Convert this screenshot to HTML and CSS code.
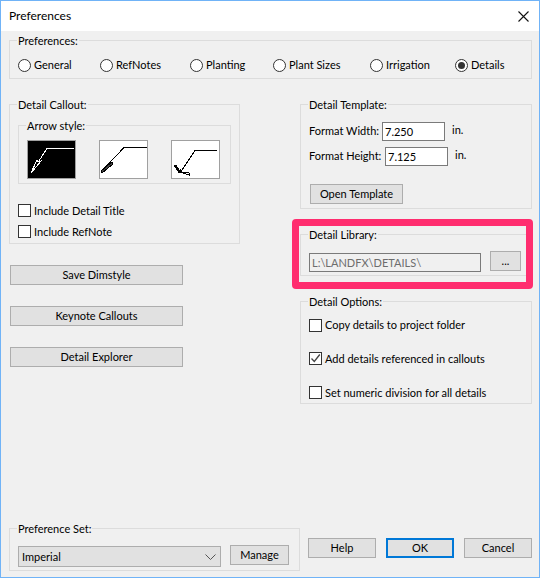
FILE: index.html
```html
<!DOCTYPE html>
<html lang="en">
<head>
<meta charset="utf-8">
<title>Preferences</title>
<link rel="stylesheet" href="styles.css">
</head>
<body>
<div class="window">
  <header class="titlebar">
    <span>Preferences</span>
    <svg class="close" width="11" height="11" viewBox="0 0 11 11"><path d="M.5.5l10 10M10.5.5l-10 10" stroke="#111" stroke-width="1.1" fill="none"/></svg>
  </header>
  <main class="content">
    <section class="group prefs">
      <div class="legend">Preferences:</div>
      <div class="radios">
        <label class="option"><i class="radio"></i>General</label>
        <label class="option"><i class="radio"></i>RefNotes</label>
        <label class="option"><i class="radio"></i>Planting</label>
        <label class="option"><i class="radio"></i>Plant Sizes</label>
        <label class="option"><i class="radio"></i>Irrigation</label>
        <label class="option"><i class="radio on"></i>Details</label>
      </div>
    </section>
    <div class="columns">
      <div class="col">
        <section class="group callout">
          <div class="legend">Detail Callout:</div>
          <section class="group arrows">
            <div class="legend">Arrow style:</div>
            <div class="arrow-row">
              <svg class="arrow-box selected" width="49" height="39" viewBox="0 0 49 39">
                <path d="M47 8.500H20L4 33" stroke="#fff" fill="none"/>
                <path d="M4 33l6-13 1 2 3-1z" stroke="#fff" fill="#000"/>
              </svg>
              <svg class="arrow-box" width="49" height="39" viewBox="0 0 49 39">
                <path d="M48 7.500H25L1.500 32.500" stroke="#000" fill="none"/>
                <path d="M2 31l11-9 1 2-11 9z" stroke="#000" fill="#444"/>
              </svg>
              <svg class="arrow-box" width="49" height="39" viewBox="0 0 49 39">
                <path d="M46 10.500H24L9 33" stroke="#000" fill="none"/>
                <path d="M4 25l5 8" stroke="#000" stroke-width="2.500" fill="none"/>
                <path d="M9 32l9 3 0-2-7-1-2-3" stroke="#000" fill="none"/>
              </svg>
            </div>
          </section>
          <label class="check first"><i class="box"></i>Include Detail Title</label>
          <label class="check second"><i class="box"></i>Include RefNote</label>
        </section>
        <div class="actions">
          <button class="btn wide">Save Dimstyle</button>
          <button class="btn wide">Keynote Callouts</button>
          <button class="btn wide">Detail Explorer</button>
        </div>
      </div>
      <div class="col">
        <section class="group template">
          <div class="legend">Detail Template:</div>
          <div class="field width"><span class="field-label">Format Width:</span><span class="input">7.250</span><span class="unit">in.</span></div>
          <div class="field height"><span class="field-label">Format Height:</span><span class="input">7.125</span><span class="unit">in.</span></div>
          <button class="btn open">Open Template</button>
        </section>
        <section class="group library">
          <div class="highlight"></div>
          <div class="legend">Detail Library:</div>
          <div class="library-row">
            <span class="input path">L:\LANDFX\DETAILS\</span>
            <button class="btn browse">...</button>
          </div>
        </section>
        <section class="group options">
          <div class="legend">Detail Options:</div>
          <label class="check opt1"><i class="box"></i>Copy details to project folder</label>
          <label class="check opt2"><i class="box"><svg width="11" height="11" viewBox="0 0 11 11"><path d="M1.500 5.500l2.800 3 5.500-7" stroke="#444" stroke-width="1.300" fill="none"/></svg></i>Add details referenced in callouts</label>
          <label class="check opt3"><i class="box"></i>Set numeric division for all details</label>
        </section>
      </div>
    </div>
    <footer class="footer">
      <section class="group prefset">
        <div class="legend">Preference Set:</div>
        <div class="prefset-row">
          <div class="select"><span>Imperial</span>
            <svg width="11" height="6" viewBox="0 0 11 6"><path d="M.5.500l5 5 5-5" stroke="#555" fill="none"/></svg>
          </div>
          <button class="btn manage">Manage</button>
        </div>
      </section>
      <div class="dialog-buttons">
        <button class="btn dlg">Help</button>
        <button class="btn dlg default">OK</button>
        <button class="btn dlg">Cancel</button>
      </div>
    </footer>
  </main>
</div>
</body>
</html>
```
FILE: styles.css
```css
* { box-sizing: border-box; }
html, body { margin: 0; padding: 0; }
body { font: 11px/16px Lato, "Liberation Sans", sans-serif; color: #000; }
.window { width: 540px; height: 578px; border: 1px solid #70b3f7; background: #f0f0f0; display: flex; flex-direction: column; overflow: hidden; }
.titlebar { height: 30px; background: #fff; display: flex; align-items: center; justify-content: space-between; padding: 0 10px 0 8px; flex: none; font-size: 12px; }
.content { flex: 1; display: flex; flex-direction: column; padding: 9px 7px 6px 8px; }
.group { border: 1px solid #dcdcdc; position: relative; }
.legend { width: fit-content; margin: -8px 0 0 7px; padding: 0 1px; background: #f0f0f0; height: 16px; position: relative; }
.prefs { height: 39px; }
.radios { display: grid; grid-template-columns: 82px 90px 83px 97px 85px auto; margin: 8px 0 0 8px; }
.option, .check { display: flex; align-items: flex-start; height: 16px; white-space: nowrap; }
.radio { width: 13px; height: 13px; margin-top: 2px; border: 1px solid #333; border-radius: 50%; background: #fff; margin-right: 3px; display: flex; align-items: center; justify-content: center; flex: none; }
.radio.on::after { content: ""; width: 7px; height: 7px; border-radius: 50%; background: #333; }
.box { width: 13px; height: 13px; margin-top: 1px; border: 1px solid #333; background: #fff; margin-right: 3px; flex: none; display: block; }
.box svg { display: block; }
.columns { display: grid; grid-template-columns: 231px 232px; column-gap: 60px; margin-top: 25px; }
.callout { height: 140px; }
.arrows { margin: 12px 0 0 8px; width: 213px; height: 59px; }
.arrow-row { display: flex; gap: 23px; margin: 6px 0 0 8px; }
.arrow-box { background: #fff; outline: 1px solid #a0a0a0; outline-offset: -1px; display: block; flex: none; }
.arrow-box path { shape-rendering: crispEdges; }
.arrow-box.selected { background: #000; }
.check { margin-left: 8px; line-height: 15px; }
.check.first { margin-top: 19px; }
.check.second { margin-top: 5px; }
.actions { display: flex; flex-direction: column; gap: 21px; margin: 21px 0 0 1px; }
.btn { font: inherit; color: #000; background: #e1e1e1; border: 1px solid #adadad; height: 20px; padding: 0; display: block; }
.wide { width: 173px; }
.template { height: 105px; }
.field { display: flex; margin-left: 8px; }
.field.width { margin-top: 9px; }
.field.height { margin-top: 6px; }
.field-label { line-height: 18px; white-space: nowrap; }
.width .field-label { width: 73px; }
.height .field-label { width: 76px; }
.input { height: 19px; width: 63px; background: #fff; border: 1px solid #7a7a7a; padding-left: 2px; line-height: 17px; display: block; }
.unit { margin-left: 7px; line-height: 15px; }
.open { width: 93px; margin: 18px 0 0 9px; }
.library { margin-top: 25px; height: 42px; }
.highlight { position: absolute; left: -9px; top: -16px; width: 241px; height: 70px; border: 7px solid #ff2d6f; border-radius: 4px; }
.library-row { display: flex; gap: 9px; margin: 8px 0 0 8px; }
.path { width: 172px; margin-top: 2px; background: #f0f0f0; color: #6d6d6d; }
.browse { width: 31px; }
.options { margin-top: 25px; height: 103px; }
.opt1 { margin-top: 8px; line-height: 14px; }
.opt2 { margin-top: 17px; }
.opt3 { margin-top: 18px; }
.footer { margin-top: auto; display: flex; align-items: flex-end; justify-content: space-between; }
.prefset { width: 291px; height: 43px; }
.prefset-row { display: flex; gap: 9px; margin: 8px 0 0 8px; align-items: flex-start; }
.select { width: 203px; height: 21px; margin-top: 1px; background: #e1e1e1; border: 1px solid #adadad; display: flex; align-items: center; justify-content: space-between; padding: 0 4px 0 3px; }
.manage { width: 59px; }
.dialog-buttons { display: flex; gap: 10px; margin-bottom: 13px; }
.dlg { width: 68px; }
.default { border: 2px solid #0078d7; }
```
